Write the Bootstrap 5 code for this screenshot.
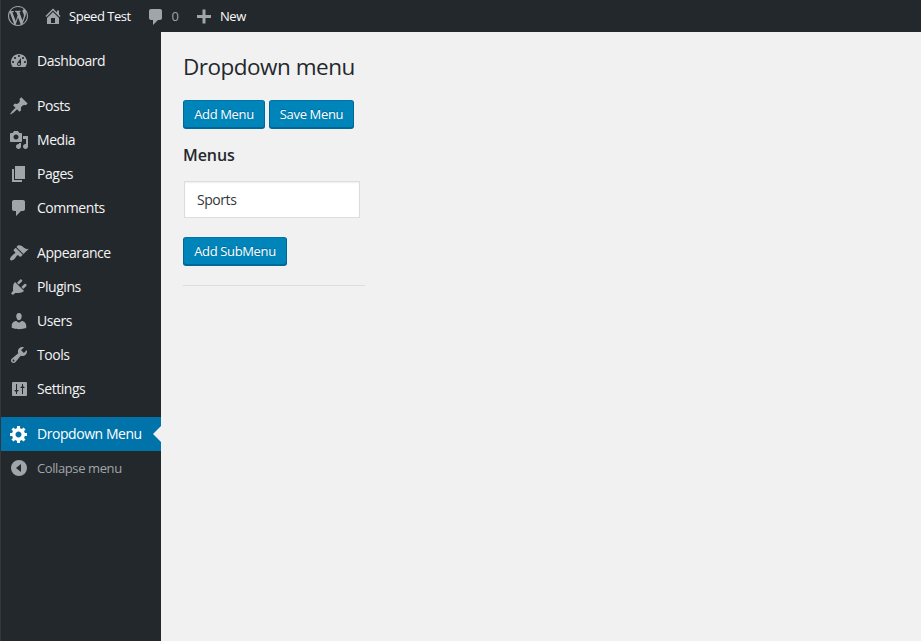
<!DOCTYPE html>
<html lang="en">
<head>
<meta charset="utf-8">
<meta name="viewport" content="width=device-width, initial-scale=1">
<title>Dropdown menu</title>
<link href="https://cdn.jsdelivr.net/npm/bootstrap@5.3.0/dist/css/bootstrap.min.css" rel="stylesheet">
<style>
body{font-family:"Open Sans","Noto Sans",sans-serif;font-size:13px;background:#f1f1f1;color:#444;border-left:1px solid #32373c;overflow:hidden}
.topbar{height:32px;background:#23282d;color:#eee;line-height:32px;padding-left:7px;letter-spacing:-.45px}
.topbar a{color:#fafafa}
.ico{width:20px;height:20px;fill:#a0a5aa;flex:none;display:block}
.site{margin-left:15px;width:102.500px}
.topbar span{margin-left:6px}
.talk{width:48.500px}
.talk .ico{margin-top:2px}
.talk span{color:#a0a5aa}
.side{width:160px;background:#23282d;padding-top:12px}
.side .nav-link{height:34px;padding:0 0 0 8px;gap:8px;font-size:14px;line-height:34px;color:#f4f4f4;letter-spacing:-.45px;white-space:nowrap}
.side .sep{margin-top:11px}
.side .nav-link.active{background:#0073aa;color:#fff;position:relative}
.side .nav-link.active .ico{fill:#fff}
.side .nav-link.active::after{content:"";position:absolute;right:0;top:9px;border:8px solid transparent;border-right-color:#f1f1f1;border-left:0}
.side .fold{font-size:13px;color:#a0a5aa;letter-spacing:-.4px}
.main-area{padding:20px 0 0 22px}
h1{font-size:22.500px;font-weight:400;line-height:30px;color:#23282d;margin:0 0 18px;letter-spacing:-.5px}
h2{font-size:16px;font-weight:600;line-height:22px;color:#23282d;margin:16px 0 15px;letter-spacing:-.05px}
.btn-wp{height:28px;padding:0;line-height:26px;font-size:13px;letter-spacing:-.35px;color:#fff;background:#0085ba;border:1px solid #006799;border-top-color:#0073aa;border-radius:3px;box-shadow:0 1px 0 #006799;text-shadow:0 -1px 1px #006799}
.w-add{width:82px}
.w-save{width:85px}
.w-sub{width:104px}
.field{width:176px;height:37px;margin:0 0 19px 1px;padding:0 12px;border:1px solid #ddd;border-radius:0;font-size:14px;letter-spacing:-.45px;color:#32373c;box-shadow:inset 0 1px 2px rgba(0,0,0,.07)}
.rule{width:182px;height:1px;background:#ddd;margin-top:20px}
</style>
<script src="https://cdn.jsdelivr.net/npm/bootstrap@5.3.0/dist/js/bootstrap.bundle.min.js"></script>
</head>
<body class="vh-100 d-flex flex-column">
<svg class="d-none" viewBox="0 0 20 20">
<symbol id="comment" viewBox="0 0 20 20"><path d="M5 2h9c1.1 0 2 .9 2 2v7c0 1.1-.9 2-2 2h-2l-5 5v-5H5c-1.1 0-2-.9-2-2V4c0-1.1.9-2 2-2z"/></symbol>
</svg>
<header class="topbar d-flex">
  <a href="#" class="d-flex align-items-center"><svg class="ico" viewBox="0 0 20 20"><path d="M20 10c0-5.51-4.49-10-10-10C4.48 0 0 4.49 0 10c0 5.52 4.48 10 10 10 5.51 0 10-4.48 10-10zM7.78 15.37L4.37 6.22c.55-.02 1.17-.08 1.17-.08.5-.06.44-1.13-.06-1.11 0 0-1.45.11-2.37.11-.18 0-.37 0-.58-.01C4.12 2.69 6.87 1.11 10 1.11c2.33 0 4.45.87 6.05 2.34-.68-.11-1.65.39-1.65 1.58 0 .74.45 1.36.9 2.1.35.61.55 1.36.55 2.46 0 1.49-1.4 5-1.4 5l-3.03-8.37c.54-.02.82-.17.82-.17.5-.05.44-1.25-.06-1.22 0 0-1.44.12-2.38.12-.87 0-2.33-.12-2.33-.12-.5-.03-.56 1.2-.06 1.22l.92.08 1.26 3.41zM17.41 10c.24-.64.74-1.87.43-4.25.7 1.29 1.05 2.71 1.05 4.25 0 3.29-1.73 6.24-4.4 7.78.97-2.59 1.94-5.2 2.92-7.78zM6.1 18.09C3.12 16.65 1.11 13.53 1.11 10c0-1.3.23-2.48.72-3.59C3.25 10.3 4.67 14.2 6.1 18.09zm4.03-6.63l2.58 6.98c-.86.29-1.76.45-2.71.45-.79 0-1.57-.11-2.29-.33.81-2.38 1.62-4.74 2.42-7.1z"/></svg></a>
  <a href="#" class="site d-flex align-items-center text-decoration-none"><svg class="ico" viewBox="0 0 20 20"><path d="M16 8.5l1.53 1.53-1.06 1.06L10 4.6l-6.47 6.49-1.06-1.06L10 2.5l4 4v-2h2v4zm-6-2.46l6 5.99V18H4v-5.97zM12 17v-5H8v5h4z"/></svg><span>Speed Test</span></a>
  <a href="#" class="talk d-flex align-items-center text-decoration-none"><svg class="ico"><use href="#comment"/></svg><span>0</span></a>
  <a href="#" class="fresh d-flex align-items-center text-decoration-none"><svg class="ico" viewBox="0 0 20 20"><path d="M17 9v3h-5.500v5.500h-3V12H3V9h5.500V3.500h3V9z"/></svg><span>New</span></a>
</header>
<div class="d-flex flex-grow-1">
<nav class="side nav flex-column flex-nowrap">
  <a href="#" class="nav-link d-flex align-items-center"><svg class="ico" viewBox="0 0 20 20"><path d="M3.76 16h12.48c1.1-1.37 1.76-3.11 1.76-5 0-4.42-3.58-8-8-8s-8 3.58-8 8c0 1.89.66 3.63 1.76 5zM10 4c.55 0 1 .45 1 1s-.45 1-1 1-1-.45-1-1 .45-1 1-1zM6 6c.55 0 1 .45 1 1s-.45 1-1 1-1-.45-1-1 .45-1 1-1zm8 0c.55 0 1 .45 1 1s-.45 1-1 1-1-.45-1-1 .45-1 1-1zm-5.370 5.550L12 7v6c0 1.100-.9 2-2 2s-2-.9-2-2c0-.57.24-1.080.63-1.450zM4 10c.55 0 1 .45 1 1s-.45 1-1 1-1-.45-1-1 .45-1 1-1zm12 0c.55 0 1 .45 1 1s-.45 1-1 1-1-.45-1-1 .45-1 1-1zm-5 3c0-.55-.45-1-1-1s-1 .45-1 1 .45 1 1 1 1-.45 1-1z"/></svg>Dashboard</a>
  <a href="#" class="nav-link d-flex align-items-center sep"><svg class="ico" viewBox="0 0 20 20"><path d="M10.440 3.020l1.820-1.820 6.360 6.350-1.830 1.820c-1.050-.68-2.480-.57-3.410.36l-.75.75c-.92.93-1.040 2.350-.35 3.410l-1.830 1.820-2.410-2.410-2.800 2.790c-.42.42-3.380 2.710-3.800 2.290s1.860-3.390 2.280-3.810l2.790-2.790L4.100 9.360l1.830-1.820c1.050.69 2.480.57 3.400-.36l.75-.75c.93-.92 1.050-2.350.36-3.410z"/></svg>Posts</a>
  <a href="#" class="nav-link d-flex align-items-center"><svg class="ico" viewBox="0 0 20 20"><path d="M13 11V4c0-.55-.45-1-1-1h-1.670L9 1H5L3.670 3H2c-.55 0-1 .45-1 1v7c0 .55.45 1 1 1h10c.55 0 1-.45 1-1zM7 4.500c1.380 0 2.500 1.120 2.500 2.500S8.380 9.500 7 9.500 4.500 8.380 4.500 7 5.620 4.500 7 4.500zM14 6h5v10.500c0 1.380-1.120 2.500-2.500 2.500S14 17.880 14 16.500s1.120-2.500 2.500-2.500c.17 0 .34.02.5.05V9h-3V6zm-4 8.050V13h2v3.500c0 1.380-1.120 2.500-2.500 2.500S7 17.880 7 16.500 8.120 14 9.500 14c.17 0 .34.02.5.05z"/></svg>Media</a>
  <a href="#" class="nav-link d-flex align-items-center"><svg class="ico" viewBox="0 0 20 20"><path d="M6 15V2h10v13H6zm-1 1h8v2H3V5h2v11z"/></svg>Pages</a>
  <a href="#" class="nav-link d-flex align-items-center"><svg class="ico"><use href="#comment"/></svg>Comments</a>
  <a href="#" class="nav-link d-flex align-items-center sep"><svg class="ico" viewBox="0 0 20 20"><path d="M14.480 11.060L7.410 3.990l1.500-1.500c.5-.56 2.300-.47 3.510.32 1.210.8 1.430 1.280 2.910 2.100 1.180.64 2.450 1.260 4.450.85zm-.71.71L6.700 4.700 4.930 6.470c-.39.39-.39 1.020 0 1.410l1.060 1.060c.39.39.39 1.030 0 1.420-.6.6-1.430 1.110-2.210 1.690-.35.26-.7.53-1.010.84C1.430 14.230.4 16.080 1.400 17.070c.99 1 2.840-.03 4.180-1.360.31-.31.58-.66.85-1.020.57-.78 1.080-1.610 1.690-2.210.39-.39 1.020-.39 1.410 0l1.060 1.060c.39.39 1.020.39 1.410 0z"/></svg>Appearance</a>
  <a href="#" class="nav-link d-flex align-items-center"><svg class="ico" viewBox="0 0 20 20"><path d="M13.110 4.360L9.870 7.600 8 5.730l3.240-3.240c.35-.34 1.050-.2 1.560.32.52.51.66 1.210.31 1.550zm-8 1.770l.91-1.120 9.010 9.010-1.190.84c-.71.71-2.630 1.160-3.820 1.160H6.140L4.900 17.260c-.59.59-1.540.59-2.120 0-.59-.58-.59-1.530 0-2.120l1.240-1.240v-3.880c0-1.130.4-3.190 1.090-3.890zm7.260 3.970l3.240-3.240c.34-.35 1.040-.21 1.550.31.52.51.66 1.210.31 1.550l-3.240 3.250z"/></svg>Plugins</a>
  <a href="#" class="nav-link d-flex align-items-center"><svg class="ico" viewBox="0 0 20 20"><path d="M10 9.250c-2.270 0-2.730-3.440-2.730-3.440C7 4.020 7.820 2 9.970 2c2.160 0 2.980 2.020 2.710 3.810 0 0-.41 3.440-2.680 3.440zm0 2.570L12.720 10c2.390 0 4.520 2.330 4.520 4.530v2.490s-3.650 1.130-7.240 1.130c-3.650 0-7.240-1.130-7.240-1.130v-2.490c0-2.250 1.940-4.480 4.470-4.480z"/></svg>Users</a>
  <a href="#" class="nav-link d-flex align-items-center"><svg class="ico" viewBox="0 0 20 20"><path d="M16.680 9.770c-1.340 1.340-3.300 1.670-4.950.99l-5.410 6.520c-.99.99-2.590.99-3.580 0s-.99-2.590 0-3.570l6.520-5.420c-.68-1.650-.35-3.610.99-4.950 1.280-1.280 3.120-1.620 4.720-1.060l-2.890 2.890 2.820 2.820 2.860-2.870c.53 1.580.18 3.390-1.080 4.650zM3.810 16.210c.4.39 1.040.39 1.430 0 .4-.4.4-1.040 0-1.430-.39-.4-1.030-.4-1.430 0-.39.39-.39 1.030 0 1.430z"/></svg>Tools</a>
  <a href="#" class="nav-link d-flex align-items-center"><svg class="ico" viewBox="0 0 20 20"><path fill-rule="evenodd" d="M4 3h13q1 0 1 1v12q0 1-1 1H4q-1 0-1-1V4q0-1 1-1zM7 5h1v6h2l-2 2v2H7v-2l-2-2h2zM13 5h1v2l2 2h-2v6h-1V9h-2l2-2z"/></svg>Settings</a>
  <a href="#" class="nav-link d-flex align-items-center sep active"><svg class="ico" viewBox="0 0 20 20"><path d="M18 12h-2.180c-.17.7-.44 1.350-.81 1.930l1.540 1.540-2.100 2.100-1.540-1.540c-.58.36-1.230.63-1.910.79V19H8v-2.180c-.68-.16-1.330-.43-1.910-.79l-1.540 1.540-2.120-2.120 1.540-1.540c-.36-.58-.63-1.230-.79-1.910H1V9.030h2.170c.16-.7.44-1.350.8-1.940L2.430 5.550l2.100-2.100 1.540 1.540c.58-.37 1.240-.64 1.930-.81V2h3v2.180c.68.16 1.330.43 1.910.79l1.540-1.540 2.120 2.120-1.540 1.540c.36.59.64 1.240.8 1.940H18V12zm-8.500 1.500c1.660 0 3-1.340 3-3s-1.340-3-3-3-3 1.340-3 3 1.340 3 3 3z"/></svg>Dropdown Menu</a>
  <a href="#" class="nav-link d-flex align-items-center fold"><svg class="ico" viewBox="0 0 20 20"><path fill-rule="evenodd" d="M10 2a8 8 0 1 1 0 16a8 8 0 1 1 0-16zM12 6l-5 4 5 4z"/></svg>Collapse menu</a>
</nav>
<main class="main-area">
  <h1>Dropdown menu</h1>
  <div class="d-flex gap-1"><button class="btn btn-wp w-add">Add Menu</button><button class="btn btn-wp w-save">Save Menu</button></div>
  <h2>Menus</h2>
  <input class="form-control field" value="Sports">
  <button class="btn btn-wp w-sub d-block">Add SubMenu</button>
  <div class="rule"></div>
</main>
</div>
</body>
</html>
